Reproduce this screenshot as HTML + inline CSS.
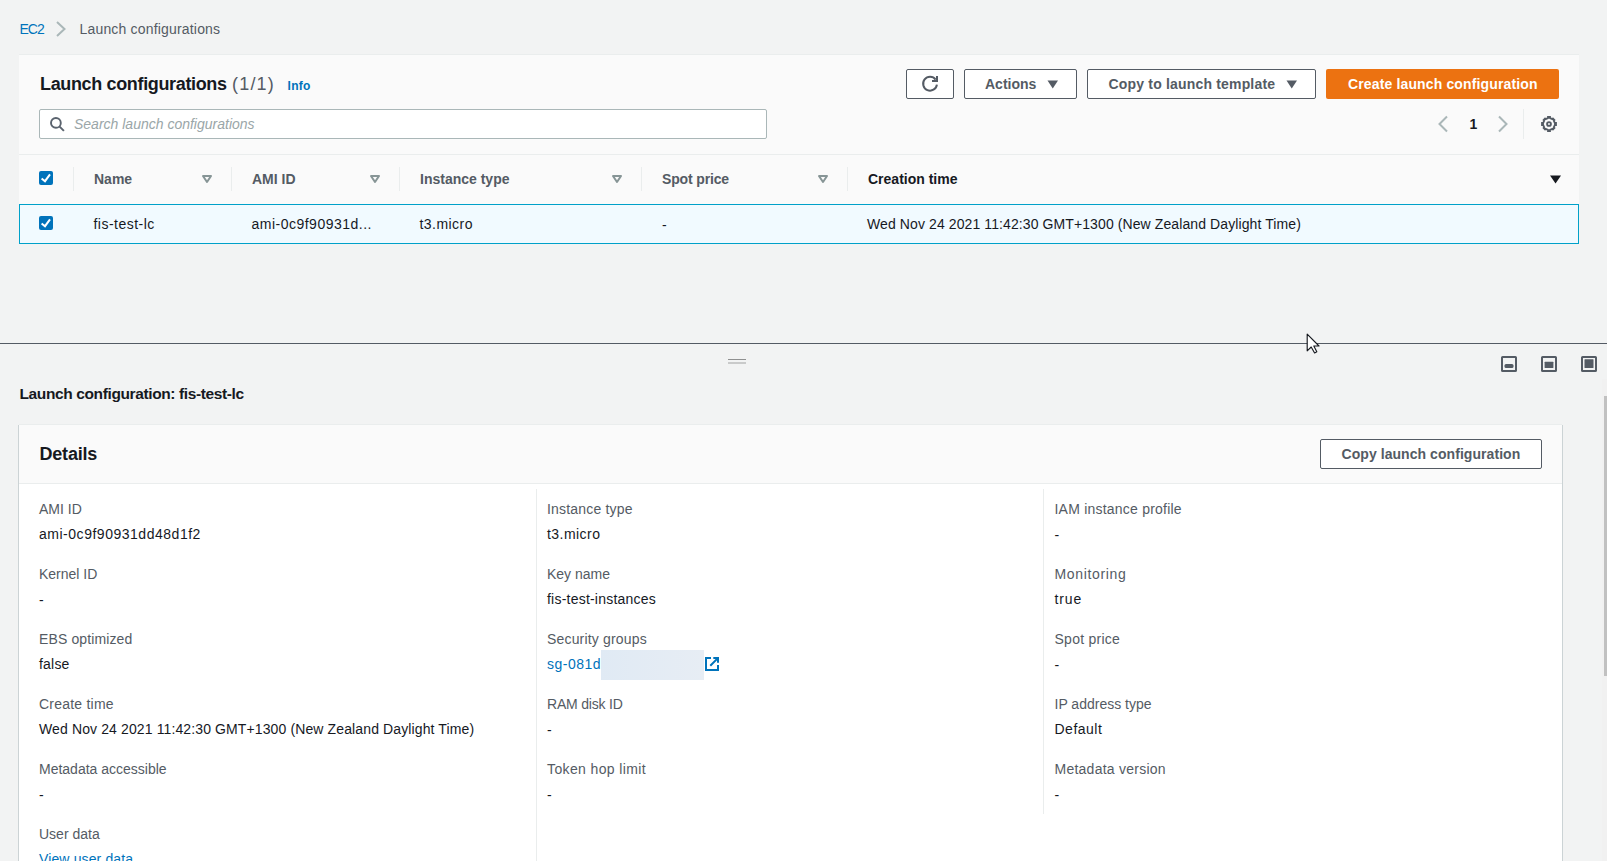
<!DOCTYPE html>
<html><head><meta charset="utf-8"><title>Launch configurations</title>
<style>
html,body{margin:0;padding:0;}
body{width:1607px;height:861px;overflow:hidden;background:#f2f3f3;position:relative;font-family:"Liberation Sans",sans-serif;}
.t{position:absolute;white-space:nowrap;}
.b{position:absolute;}
svg.b{overflow:visible;}
</style></head><body>
<div class="t" style="left:19.5px;top:22.14px;font-size:14px;line-height:14px;font-weight:400;color:#0073bb;font-style:normal;letter-spacing:-1.0px;">EC2</div>
<svg class="b" style="left:55px;top:21px" width="12" height="16" viewBox="0 0 12 16"><path d="M2 1 L9.5 8 L2 15" fill="none" stroke="#aab7b8" stroke-width="2"/></svg>
<div class="t" style="left:79.5px;top:22.14px;font-size:14px;line-height:14px;font-weight:400;color:#545b64;font-style:normal;letter-spacing:0.18px;">Launch configurations</div>
<div class="b" style="left:19px;top:54px;width:1560px;height:190px;background:#fafafa;border-top:1px solid #eaeded;box-sizing:border-box"></div>
<div class="t" style="left:40px;top:74.75px;font-size:18px;line-height:18px;font-weight:700;color:#16191f;font-style:normal;letter-spacing:-0.35px;">Launch configurations</div>
<div class="t" style="left:232px;top:74.75px;font-size:18px;line-height:18px;font-weight:400;color:#545b64;font-style:normal;letter-spacing:1.2px;">(1/1)</div>
<div class="t" style="left:287.5px;top:79.84px;font-size:12px;line-height:12px;font-weight:700;color:#0073bb;font-style:normal;letter-spacing:0.3px;">Info</div>
<div class="b" style="left:906px;top:69px;width:48px;height:30px;background:#fff;border:1px solid #545b64;border-radius:2px;box-sizing:border-box"></div>
<svg class="b" style="left:922px;top:76px" width="16" height="16" viewBox="0 0 16 16"><path d="M14.9 8.6 A6.9 6.9 0 1 1 13.6 3.6" fill="none" stroke="#545b64" stroke-width="2"/><path d="M10 4.9 L15 4.9 L15 0" fill="none" stroke="#545b64" stroke-width="2"/></svg>
<div class="b" style="left:964px;top:69px;width:113px;height:30px;background:#fff;border:1px solid #545b64;border-radius:2px;box-sizing:border-box"></div>
<div class="t" style="left:985px;top:77.14px;font-size:14px;line-height:14px;font-weight:700;color:#545b64;font-style:normal;">Actions</div>
<svg class="b" style="left:1047px;top:80px" width="12" height="9" viewBox="0 0 12 9"><path d="M0.5 0.5 L11 0.5 L5.75 8.5 Z" fill="#545b64"/></svg>
<div class="b" style="left:1087px;top:69px;width:229px;height:30px;background:#fff;border:1px solid #545b64;border-radius:2px;box-sizing:border-box"></div>
<div class="t" style="left:1108.5px;top:77.14px;font-size:14px;line-height:14px;font-weight:700;color:#545b64;font-style:normal;letter-spacing:0.18px;">Copy to launch template</div>
<svg class="b" style="left:1286px;top:80px" width="12" height="9" viewBox="0 0 12 9"><path d="M0.5 0.5 L11 0.5 L5.75 8.5 Z" fill="#545b64"/></svg>
<div class="b" style="left:1326px;top:69px;width:233px;height:30px;background:#ec7211;border-radius:2px"></div>
<div class="t" style="left:1348px;top:77.14px;font-size:14px;line-height:14px;font-weight:700;color:#fff;font-style:normal;letter-spacing:0.14px;">Create launch configuration</div>
<div class="b" style="left:39px;top:109px;width:728px;height:30px;background:#fff;border:1px solid #aab7b8;border-radius:2px;box-sizing:border-box"></div>
<svg class="b" style="left:49px;top:117px" width="16" height="16" viewBox="0 0 16 16"><circle cx="6.9" cy="5.9" r="4.9" fill="none" stroke="#5a636e" stroke-width="1.9"/><path d="M10.6 9.6 L14.9 13.9" stroke="#5a636e" stroke-width="2"/></svg>
<div class="t" style="left:74px;top:117.14px;font-size:14px;line-height:14px;font-weight:400;color:#9aa6a8;font-style:italic;">Search launch configurations</div>
<svg class="b" style="left:1437px;top:115px" width="12" height="18" viewBox="0 0 12 18"><path d="M10 1.5 L2.5 9 L10 16.5" fill="none" stroke="#aab7b8" stroke-width="2"/></svg>
<div class="t" style="left:1469.5px;top:117.14px;font-size:14px;line-height:14px;font-weight:700;color:#16191f;font-style:normal;">1</div>
<svg class="b" style="left:1497px;top:115px" width="12" height="18" viewBox="0 0 12 18"><path d="M2 1.5 L9.5 9 L2 16.5" fill="none" stroke="#aab7b8" stroke-width="2"/></svg>
<div class="b" style="left:1523px;top:109px;width:1px;height:30px;background:#eaeded"></div>
<svg class="b" style="left:1541px;top:116px" width="16" height="16" viewBox="0 0 16 16"><path fill="none" stroke="#545b64" stroke-width="1.8" stroke-linejoin="miter" d="M7.00 2.19 L7.00 1.00 L9.00 1.00 L9.00 2.19 L11.40 3.18 L11.96 2.63 L13.37 4.04 L12.82 4.60 L13.81 7.00 L15.00 7.00 L15.00 9.00 L13.81 9.00 L12.82 11.40 L13.37 11.96 L11.96 13.37 L11.40 12.82 L9.00 13.81 L9.00 15.00 L7.00 15.00 L7.00 13.81 L4.60 12.82 L4.04 13.37 L2.63 11.96 L3.18 11.40 L2.19 9.00 L1.00 9.00 L1.00 7.00 L2.19 7.00 L3.18 4.60 L2.63 4.04 L4.04 2.63 L4.60 3.18 Z"/><circle cx="8" cy="8" r="1.9" fill="none" stroke="#545b64" stroke-width="1.9"/></svg>
<div class="b" style="left:19px;top:154px;width:1560px;height:1px;background:#eaeded"></div>
<svg class="b" style="left:39px;top:171px" width="14" height="14" viewBox="0 0 14 14"><rect x="0" y="0" width="14" height="14" rx="2" fill="#0073bb"/><path d="M2.6 7.4 L6 10.2 L11 3.3" fill="none" stroke="#fff" stroke-width="2"/></svg>
<div class="b" style="left:73px;top:167px;width:1px;height:24px;background:#eaeded"></div>
<div class="b" style="left:231px;top:167px;width:1px;height:24px;background:#eaeded"></div>
<div class="b" style="left:399px;top:167px;width:1px;height:24px;background:#eaeded"></div>
<div class="b" style="left:641px;top:167px;width:1px;height:24px;background:#eaeded"></div>
<div class="b" style="left:847px;top:167px;width:1px;height:24px;background:#eaeded"></div>
<div class="t" style="left:94px;top:172.14px;font-size:14px;line-height:14px;font-weight:700;color:#545b64;font-style:normal;">Name</div>
<svg class="b" style="left:202px;top:175px" width="10" height="8" viewBox="0 0 10 8"><path d="M1 1 L9 1 L5 7 Z" fill="none" stroke="#879596" stroke-width="2" stroke-linejoin="round"/></svg>
<div class="t" style="left:252px;top:172.14px;font-size:14px;line-height:14px;font-weight:700;color:#545b64;font-style:normal;">AMI ID</div>
<svg class="b" style="left:370px;top:175px" width="10" height="8" viewBox="0 0 10 8"><path d="M1 1 L9 1 L5 7 Z" fill="none" stroke="#879596" stroke-width="2" stroke-linejoin="round"/></svg>
<div class="t" style="left:420px;top:172.14px;font-size:14px;line-height:14px;font-weight:700;color:#545b64;font-style:normal;">Instance type</div>
<svg class="b" style="left:612px;top:175px" width="10" height="8" viewBox="0 0 10 8"><path d="M1 1 L9 1 L5 7 Z" fill="none" stroke="#879596" stroke-width="2" stroke-linejoin="round"/></svg>
<div class="t" style="left:662px;top:172.14px;font-size:14px;line-height:14px;font-weight:700;color:#545b64;font-style:normal;letter-spacing:-0.15px;">Spot price</div>
<svg class="b" style="left:818px;top:175px" width="10" height="8" viewBox="0 0 10 8"><path d="M1 1 L9 1 L5 7 Z" fill="none" stroke="#879596" stroke-width="2" stroke-linejoin="round"/></svg>
<div class="t" style="left:868px;top:172.14px;font-size:14px;line-height:14px;font-weight:700;color:#16191f;font-style:normal;">Creation time</div>
<svg class="b" style="left:1550px;top:175px" width="11" height="9" viewBox="0 0 11 9"><path d="M0 0.5 L11 0.5 L5.5 8.5 Z" fill="#16191f"/></svg>
<div class="b" style="left:19px;top:204px;width:1560px;height:40px;background:#f1faff;border:1px solid #00a1c9;box-sizing:border-box"></div>
<svg class="b" style="left:39px;top:216px" width="14" height="14" viewBox="0 0 14 14"><rect x="0" y="0" width="14" height="14" rx="2" fill="#0073bb"/><path d="M2.6 7.4 L6 10.2 L11 3.3" fill="none" stroke="#fff" stroke-width="2"/></svg>
<div class="t" style="left:93.5px;top:217.14px;font-size:14px;line-height:14px;font-weight:400;color:#16191f;font-style:normal;letter-spacing:0.48px;">fis-test-lc</div>
<div class="t" style="left:251.5px;top:217.14px;font-size:14px;line-height:14px;font-weight:400;color:#16191f;font-style:normal;letter-spacing:0.49px;">ami-0c9f90931d...</div>
<div class="t" style="left:419.5px;top:217.14px;font-size:14px;line-height:14px;font-weight:400;color:#16191f;font-style:normal;letter-spacing:0.45px;">t3.micro</div>
<div class="t" style="left:662px;top:217.74px;font-size:14px;line-height:14px;font-weight:400;color:#16191f;font-style:normal;">-</div>
<div class="t" style="left:867px;top:217.14px;font-size:14px;line-height:14px;font-weight:400;color:#16191f;font-style:normal;letter-spacing:0.1px;">Wed Nov 24 2021 11:42:30 GMT+1300 (New Zealand Daylight Time)</div>
<div class="b" style="left:0px;top:343px;width:1607px;height:1px;background:#545b64"></div>
<div class="b" style="left:728px;top:359px;width:18px;height:1px;background:#8f9090"></div>
<div class="b" style="left:728px;top:362px;width:18px;height:2px;background:#c9caca"></div>
<svg class="b" style="left:1501px;top:356px" width="16" height="16" viewBox="0 0 16 16"><rect x="1" y="1" width="14" height="14" rx="0.6" fill="none" stroke="#545b64" stroke-width="2"/><rect x="3.5" y="8" width="9" height="4" rx="1.5" fill="#545b64"/></svg>
<svg class="b" style="left:1541px;top:356px" width="16" height="16" viewBox="0 0 16 16"><rect x="1" y="1" width="14" height="14" rx="0.6" fill="none" stroke="#545b64" stroke-width="2"/><rect x="3.6" y="5.8" width="8.8" height="6.2" rx="0.5" fill="#545b64"/></svg>
<svg class="b" style="left:1581px;top:356px" width="16" height="16" viewBox="0 0 16 16"><rect x="1" y="1" width="14" height="14" rx="0.6" fill="none" stroke="#545b64" stroke-width="2"/><rect x="3.5" y="3.3" width="9" height="8.7" rx="0.5" fill="#545b64"/></svg>
<div class="b" style="left:1602px;top:379px;width:5px;height:482px;background:#f1f1f1"></div>
<div class="b" style="left:1604px;top:396px;width:3px;height:280px;background:#c1c1c1"></div>
<div class="t" style="left:19.5px;top:386.37px;font-size:15.5px;line-height:15.5px;font-weight:700;color:#16191f;font-style:normal;letter-spacing:-0.38px;">Launch configuration: fis-test-lc</div>
<div class="b" style="left:19px;top:424px;width:1543px;height:437px;background:#fff;border-top:1px solid #eaeded;box-sizing:border-box"></div>
<div class="b" style="left:18px;top:425px;width:1px;height:436px;background:#ccd3d5"></div>
<div class="b" style="left:1562px;top:425px;width:1px;height:436px;background:#ccd3d5"></div>
<div class="b" style="left:19px;top:425px;width:1543px;height:58px;background:#fafafa"></div>
<div class="b" style="left:19px;top:483px;width:1543px;height:1px;background:#eaeded"></div>
<div class="t" style="left:39.5px;top:444.75px;font-size:18px;line-height:18px;font-weight:700;color:#16191f;font-style:normal;letter-spacing:-0.2px;">Details</div>
<div class="b" style="left:1320px;top:439px;width:222px;height:30px;background:#fff;border:1px solid #545b64;border-radius:2px;box-sizing:border-box"></div>
<div class="t" style="left:1341.5px;top:447.14px;font-size:14px;line-height:14px;font-weight:700;color:#545b64;font-style:normal;letter-spacing:0.06px;">Copy launch configuration</div>
<div class="b" style="left:536px;top:489px;width:1px;height:372px;background:#eaeded"></div>
<div class="b" style="left:1043px;top:489px;width:1px;height:325px;background:#eaeded"></div>
<div class="t" style="left:39px;top:502.14px;font-size:14px;line-height:14px;font-weight:400;color:#545b64;font-style:normal;">AMI ID</div>
<div class="t" style="left:39px;top:527.14px;font-size:14px;line-height:14px;font-weight:400;color:#16191f;font-style:normal;letter-spacing:0.52px;">ami-0c9f90931dd48d1f2</div>
<div class="t" style="left:39px;top:567.14px;font-size:14px;line-height:14px;font-weight:400;color:#545b64;font-style:normal;">Kernel ID</div>
<div class="t" style="left:39px;top:592.74px;font-size:14px;line-height:14px;font-weight:400;color:#16191f;font-style:normal;">-</div>
<div class="t" style="left:39px;top:632.14px;font-size:14px;line-height:14px;font-weight:400;color:#545b64;font-style:normal;letter-spacing:0.12px;">EBS optimized</div>
<div class="t" style="left:39px;top:657.14px;font-size:14px;line-height:14px;font-weight:400;color:#16191f;font-style:normal;letter-spacing:0.2px;">false</div>
<div class="t" style="left:39px;top:697.14px;font-size:14px;line-height:14px;font-weight:400;color:#545b64;font-style:normal;letter-spacing:0.22px;">Create time</div>
<div class="t" style="left:39px;top:722.14px;font-size:14px;line-height:14px;font-weight:400;color:#16191f;font-style:normal;letter-spacing:0.12px;">Wed Nov 24 2021 11:42:30 GMT+1300 (New Zealand Daylight Time)</div>
<div class="t" style="left:39px;top:762.14px;font-size:14px;line-height:14px;font-weight:400;color:#545b64;font-style:normal;">Metadata accessible</div>
<div class="t" style="left:39px;top:787.74px;font-size:14px;line-height:14px;font-weight:400;color:#16191f;font-style:normal;">-</div>
<div class="t" style="left:39px;top:827.14px;font-size:14px;line-height:14px;font-weight:400;color:#545b64;font-style:normal;">User data</div>
<div class="t" style="left:39px;top:852.14px;font-size:14px;line-height:14px;font-weight:400;color:#16191f;font-style:normal;"><span style="color:#0073bb;letter-spacing:0.13px">View user data</span></div>
<div class="t" style="left:547px;top:502.14px;font-size:14px;line-height:14px;font-weight:400;color:#545b64;font-style:normal;letter-spacing:0.18px;">Instance type</div>
<div class="t" style="left:547px;top:527.14px;font-size:14px;line-height:14px;font-weight:400;color:#16191f;font-style:normal;letter-spacing:0.45px;">t3.micro</div>
<div class="t" style="left:547px;top:567.14px;font-size:14px;line-height:14px;font-weight:400;color:#545b64;font-style:normal;">Key name</div>
<div class="t" style="left:547px;top:592.14px;font-size:14px;line-height:14px;font-weight:400;color:#16191f;font-style:normal;letter-spacing:0.22px;">fis-test-instances</div>
<div class="t" style="left:547px;top:632.14px;font-size:14px;line-height:14px;font-weight:400;color:#545b64;font-style:normal;letter-spacing:0.17px;">Security groups</div>
<div class="t" style="left:547px;top:657.14px;font-size:14px;line-height:14px;font-weight:400;color:#0073bb;font-style:normal;letter-spacing:0.5px;">sg-081dl</div>
<div class="b" style="left:601px;top:650px;width:103px;height:30px;background:linear-gradient(90deg,#e0eaf4,#e7edf4)"></div>
<svg class="b" style="left:705px;top:657px" width="14" height="14" viewBox="0 0 14 14"><path d="M6 1 L1 1 L1 13 L13 13 L13 8" fill="none" stroke="#0073bb" stroke-width="2"/><path d="M5.3 8.7 L12.6 1.4 M8.3 1 L13 1 L13 5.7" fill="none" stroke="#0073bb" stroke-width="2"/></svg>
<div class="t" style="left:547px;top:697.14px;font-size:14px;line-height:14px;font-weight:400;color:#545b64;font-style:normal;letter-spacing:-0.2px;">RAM disk ID</div>
<div class="t" style="left:547px;top:722.74px;font-size:14px;line-height:14px;font-weight:400;color:#16191f;font-style:normal;">-</div>
<div class="t" style="left:547px;top:762.14px;font-size:14px;line-height:14px;font-weight:400;color:#545b64;font-style:normal;letter-spacing:0.38px;">Token hop limit</div>
<div class="t" style="left:547px;top:787.74px;font-size:14px;line-height:14px;font-weight:400;color:#16191f;font-style:normal;">-</div>
<div class="t" style="left:1054.5px;top:502.14px;font-size:14px;line-height:14px;font-weight:400;color:#545b64;font-style:normal;letter-spacing:0.22px;">IAM instance profile</div>
<div class="t" style="left:1054.5px;top:527.74px;font-size:14px;line-height:14px;font-weight:400;color:#16191f;font-style:normal;">-</div>
<div class="t" style="left:1054.5px;top:567.14px;font-size:14px;line-height:14px;font-weight:400;color:#545b64;font-style:normal;letter-spacing:0.65px;">Monitoring</div>
<div class="t" style="left:1054.5px;top:592.14px;font-size:14px;line-height:14px;font-weight:400;color:#16191f;font-style:normal;letter-spacing:0.85px;">true</div>
<div class="t" style="left:1054.5px;top:632.14px;font-size:14px;line-height:14px;font-weight:400;color:#545b64;font-style:normal;letter-spacing:0.26px;">Spot price</div>
<div class="t" style="left:1054.5px;top:657.74px;font-size:14px;line-height:14px;font-weight:400;color:#16191f;font-style:normal;">-</div>
<div class="t" style="left:1054.5px;top:697.14px;font-size:14px;line-height:14px;font-weight:400;color:#545b64;font-style:normal;">IP address type</div>
<div class="t" style="left:1054.5px;top:722.14px;font-size:14px;line-height:14px;font-weight:400;color:#16191f;font-style:normal;letter-spacing:0.5px;">Default</div>
<div class="t" style="left:1054.5px;top:762.14px;font-size:14px;line-height:14px;font-weight:400;color:#545b64;font-style:normal;letter-spacing:0.25px;">Metadata version</div>
<div class="t" style="left:1054.5px;top:787.74px;font-size:14px;line-height:14px;font-weight:400;color:#16191f;font-style:normal;">-</div>
<svg class="b" style="left:1306px;top:333px" width="16" height="22" viewBox="0 0 16 22"><path d="M1.2 1.2 L1.2 17.8 L5.2 14 L8.6 20 L10.8 18.8 L7.8 13 L13 13 Z" fill="#fff" stroke="#16191f" stroke-width="1.15" stroke-linejoin="round"/></svg>
</body></html>
